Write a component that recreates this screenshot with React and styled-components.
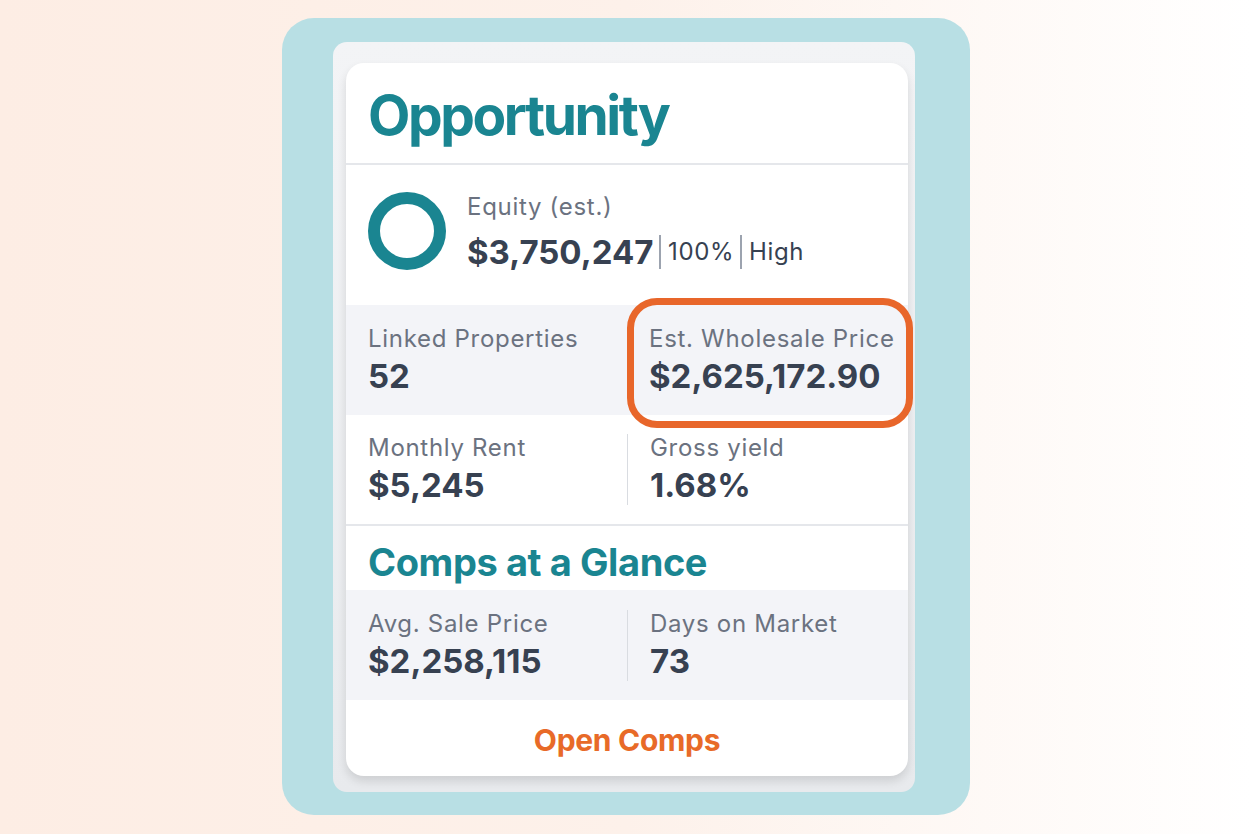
import React from 'react';
import styled, { createGlobalStyle } from 'styled-components';

const GlobalStyle = createGlobalStyle`
  html, body {
    margin: 0;
    padding: 0;
  }
  body {
    font-family: Inter, "Liberation Sans", sans-serif;
    background: linear-gradient(90deg, #fdede4 0%, #fdf1ea 50%, #ffffff 100%);
    width: 1252px;
    height: 834px;
    overflow: hidden;
  }
`;

const Page = styled.div`
  width: 1252px;
  height: 834px;
  padding: 18px 0 0 282px;
  box-sizing: border-box;
  display: flex;
  justify-content: flex-start;
`;

const Frame = styled.div`
  width: 688px;
  height: 797px;
  box-sizing: border-box;
  background: #b8dfe4;
  border-radius: 32px;
  padding: 24px 0 0 51px;
`;

const Tray = styled.div`
  width: 582px;
  height: 750px;
  box-sizing: border-box;
  background: linear-gradient(180deg, #f3f4f6 0%, #e8eaed 100%);
  border-radius: 14px;
  padding: 21px 0 0 13px;
`;

const Card = styled.div`
  position: relative;
  width: 562px;
  height: 713px;
  background: #ffffff;
  border-radius: 18px;
  box-shadow: 0 5px 10px rgba(0, 0, 0, 0.12);
  display: flex;
  flex-direction: column;
`;

const TitleBar = styled.div`
  height: 102px;
  box-sizing: border-box;
  border-bottom: 2px solid #e5e7eb;
  padding: 21px 22px 0;
`;

const Title = styled.h1`
  margin: 0;
  font-size: 55px;
  font-weight: 700;
  line-height: 62px;
  color: #1a8591;
  letter-spacing: -2.4px;
`;

const EquityRow = styled.div`
  height: 140px;
  display: flex;
  align-items: center;
  padding: 0 22px;
  gap: 21px;
`;

const Donut = styled.div`
  width: 78px;
  height: 78px;
  border-radius: 50%;
  border: 12px solid #1a8591;
  box-sizing: border-box;
  flex: none;
  margin-top: -8px;
`;

const EquityText = styled.div`
  display: flex;
  flex-direction: column;
  gap: 11px;
  margin-top: -6px;
`;

const Label = styled.div`
  font-size: 24px;
  line-height: 28px;
  letter-spacing: 0.7px;
  color: #6b7280;
  white-space: nowrap;
`;

const EquityLine = styled.div`
  display: flex;
  align-items: center;
  color: #374151;
`;

const Big = styled.span`
  font-size: 33px;
  font-weight: 700;
  line-height: 40px;
  color: #374151;
`;

const Sep = styled.span`
  width: 1.5px;
  height: 34px;
  background: #9ca3af;
  margin: 0 7px 0 6px;
`;

const Small = styled.span`
  font-size: 24px;
  line-height: 30px;
  letter-spacing: 0.7px;
  color: #374151;
`;

const StatRow = styled.div`
  height: ${p => p.$h || 110}px;
  background: ${p => (p.$gray ? '#f3f4f8' : '#ffffff')};
  display: grid;
  grid-template-columns: 1fr 1fr;
  align-items: center;
  border-bottom: ${p => (p.$line ? '2px solid #e5e7eb' : 'none')};
  box-sizing: border-box;
`;

const Stat = styled.div`
  padding: 0 8px 0 22px;
  display: flex;
  flex-direction: column;
  gap: 3px;
  border-left: ${p => (p.$divider ? '1.5px solid #d9dce1' : 'none')};
`;

const Value = styled.div`
  font-size: 33px;
  font-weight: 700;
  line-height: 40px;
  color: #374151;
  white-space: nowrap;
`;

const SubTitle = styled.h2`
  margin: 0;
  height: 64px;
  box-sizing: border-box;
  padding: 14px 22px 0;
  font-size: 38px;
  line-height: 44px;
  font-weight: 700;
  letter-spacing: -0.4px;
  color: #1a8591;
`;

const Footer = styled.div`
  flex: 1;
  display: flex;
  justify-content: center;
  align-items: center;
  padding-top: 4px;
`;

const OpenLink = styled.a`
  font-size: 30px;
  font-weight: 700;
  letter-spacing: -0.3px;
  color: #e86a28;
  text-decoration: none;
`;

const Highlight = styled.div`
  position: absolute;
  left: 281px;
  top: 235px;
  width: 286px;
  height: 130px;
  box-sizing: border-box;
  border: 7px solid #e8662a;
  border-radius: 30px;
  pointer-events: none;
`;

const App = () => {
  return (
    <>
      <GlobalStyle />
      <Page>
        <Frame>
          <Tray>
            <Card>
              <TitleBar>
                <Title>Opportunity</Title>
              </TitleBar>
              <EquityRow>
                <Donut />
                <EquityText>
                  <Label>Equity (est.)</Label>
                  <EquityLine>
                    <Big>$3,750,247</Big>
                    <Sep />
                    <Small>100%</Small>
                    <Sep />
                    <Small>High</Small>
                  </EquityLine>
                </EquityText>
              </EquityRow>
              <StatRow $gray>
                <Stat>
                  <Label>Linked Properties</Label>
                  <Value>52</Value>
                </Stat>
                <Stat>
                  <Label>Est. Wholesale Price</Label>
                  <Value>$2,625,172.90</Value>
                </Stat>
              </StatRow>
              <StatRow $line $h={111}>
                <Stat>
                  <Label>Monthly Rent</Label>
                  <Value>$5,245</Value>
                </Stat>
                <Stat $divider>
                  <Label>Gross yield</Label>
                  <Value>1.68%</Value>
                </Stat>
              </StatRow>
              <SubTitle>Comps at a Glance</SubTitle>
              <StatRow $gray>
                <Stat>
                  <Label>Avg. Sale Price</Label>
                  <Value>$2,258,115</Value>
                </Stat>
                <Stat $divider>
                  <Label>Days on Market</Label>
                  <Value>73</Value>
                </Stat>
              </StatRow>
              <Footer>
                <OpenLink href="#">Open Comps</OpenLink>
              </Footer>
              <Highlight />
            </Card>
          </Tray>
        </Frame>
      </Page>
    </>
  );
};

export default App;
